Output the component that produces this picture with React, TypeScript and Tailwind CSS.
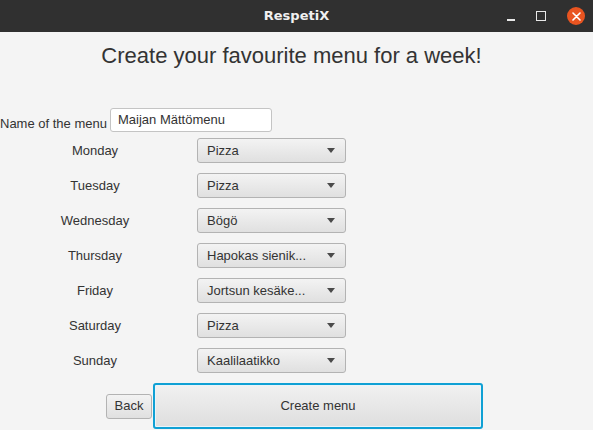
import React from 'react';

const days: { day: string; dish: string }[] = [
  { day: 'Monday', dish: 'Pizza' },
  { day: 'Tuesday', dish: 'Pizza' },
  { day: 'Wednesday', dish: 'Bögö' },
  { day: 'Thursday', dish: 'Hapokas sienik...' },
  { day: 'Friday', dish: 'Jortsun kesäke...' },
  { day: 'Saturday', dish: 'Pizza' },
  { day: 'Sunday', dish: 'Kaalilaatikko' },
];

const ComboBox: React.FC<{ value: string }> = ({ value }) => (
  <div className="ml-[7px] flex h-[25px] w-[149px] items-center justify-between rounded-[3px] border border-[#b3b3b3] bg-gradient-to-b from-[#f3f3f3] to-[#e0e0e0] pl-[9px] pr-[10px] text-[13px] text-[#333]">
    <span>{value}</span>
    <svg width="8" height="5" viewBox="0 0 8 5">
      <path d="M0 0 L8 0 L4 5 Z" fill="#4a4a4a" />
    </svg>
  </div>
);

export default function App() {
  return (
    <div className="flex h-[430px] w-[593px] flex-col overflow-hidden bg-[#f4f4f4] font-['Liberation_Sans',Arial,sans-serif] text-[#333]">
      {/* title bar */}
      <div className="relative flex h-[32px] shrink-0 items-center justify-center bg-[#303030]">
        <span className="font-['DejaVu_Sans',sans-serif] text-[13px] font-bold text-[#f0f0f0]">RespetiX</span>
        <div className="absolute right-[8px] top-0 flex h-[32px] items-center gap-[21px]">
          <div className="mt-[8px] h-[2px] w-[8px] bg-[#e8e8e8]" />
          <div className="h-[10px] w-[10px] border-[1.5px] border-[#e8e8e8]" />
          <div className="flex h-[18px] w-[18px] items-center justify-center rounded-full bg-[#e95420]">
            <svg width="9" height="9" viewBox="0 0 9 9">
              <path d="M1 1 L8 8 M8 1 L1 8" stroke="#fff" strokeWidth="1.6" strokeLinecap="round" />
            </svg>
          </div>
        </div>
      </div>

      <div className="flex flex-col">
        <h1 className="mt-[11px] pr-[10px] text-center text-[22px] leading-[26px] text-[#333]">
          Create your favourite menu for a week!
        </h1>

        <div className="mt-[39px] flex items-end">
          <span className="w-[110px] pb-[1px] text-[13px] leading-[15px]">Name of the menu</span>
          <div className="flex h-[24px] w-[162px] items-center rounded-[3px] border border-[#c4c4c4] bg-white pl-[7px] text-[13px]">
            Maijan Mättömenu
          </div>
        </div>

        <div className="mt-[6px] flex flex-col gap-[10px]">
          {days.map((d) => (
            <div key={d.day} className="flex items-center">
              <span className="w-[190px] text-center text-[13px]">{d.day}</span>
              <ComboBox value={d.dish} />
            </div>
          ))}
        </div>

        <div className="ml-[106px] mt-[10px] flex items-center">
          <button className="h-[25px] w-[46px] rounded-[3px] border border-[#b3b3b3] bg-gradient-to-b from-[#f3f3f3] to-[#e0e0e0] text-[13px] text-[#333]">
            Back
          </button>
          <button className="ml-[1px] h-[46px] w-[330px] rounded-[3px] border-2 border-[#0fa0d4] bg-gradient-to-b from-[#f1f1f1] to-[#dedede] text-[13px] text-[#333] shadow-[inset_0_0_0_1px_#e8f4fa]">
            Create menu
          </button>
        </div>
      </div>
    </div>
  );
}
